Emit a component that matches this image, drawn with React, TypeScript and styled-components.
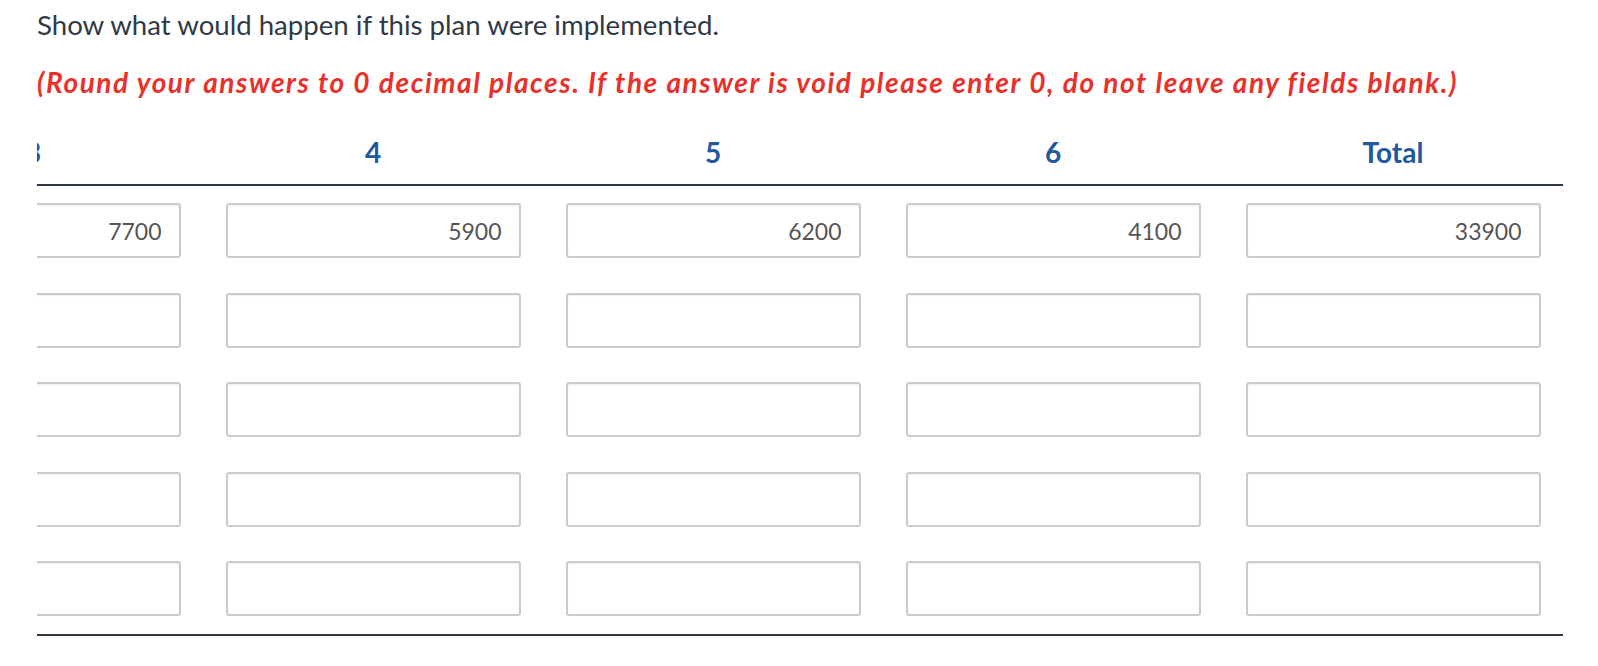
import styled, { createGlobalStyle } from "styled-components";

const GlobalStyle = createGlobalStyle`
  body {
    margin: 0;
    background: #fff;
    font-family: Lato, "Open Sans", sans-serif;
  }
`;

const Page = styled.div`
  padding: 8px 0 0 37px;
  overflow: hidden;
`;

const Prompt = styled.p`
  margin: 0;
  font-size: 27.6px;
  line-height: 34px;
  color: #2f3a45;
`;

const Note = styled.p`
  margin: 23px 0 0;
  font-size: 28px;
  line-height: normal;
  font-weight: 700;
  font-style: italic;
  letter-spacing: 1.55px;
  color: #e8312a;
`;

// the table sits in a horizontally scrolled area, columns 1-2 are off to the left
const ScrollArea = styled.div`
  margin-top: 36px;
  overflow: hidden;
`;

const Grid = styled.div`
  display: grid;
  grid-template-columns: repeat(5, 340px);
  width: 1700px;
  margin-left: -174px;
  border-bottom: 2.5px solid #2d3741;
`;

const HeadCell = styled.div`
  padding-bottom: 15px;
  border-bottom: 2px solid #2d3741;
  text-align: center;
  font-size: 28px;
  font-weight: 700;
  line-height: normal;
  color: #2158a0;
`;

const Cell = styled.div`
  display: flex;
  justify-content: center;
  padding: 17px 0 17.5px;
`;

const Field = styled.input`
  box-sizing: border-box;
  width: 295px;
  height: 55px;
  border: 2px solid #cbcbcb;
  border-radius: 3px;
  box-shadow: inset 0 1px 2px rgba(0, 0, 0, 0.07);
  padding: 0 17px;
  text-align: right;
  font-family: Lato, sans-serif;
  font-size: 23px;
  color: #555;
  background: #fff;
  outline: none;
`;

const columns = ["3", "4", "5", "6", "Total"];
const rows: string[][] = [
  ["7700", "5900", "6200", "4100", "33900"],
  ["", "", "", "", ""],
  ["", "", "", "", ""],
  ["", "", "", "", ""],
  ["", "", "", "", ""],
];

export default function App() {
  return (
    <Page>
      <GlobalStyle />
      <Prompt>Show what would happen if this plan were implemented.</Prompt>
      <Note>
        (Round your answers to 0 decimal places. If the answer is void please enter 0, do not
        leave any fields blank.)
      </Note>
      <ScrollArea>
        <Grid>
          {columns.map((c) => (
            <HeadCell key={c}>{c}</HeadCell>
          ))}
          {rows.map((row, i) =>
            row.map((v, j) => (
              <Cell key={`${i}-${j}`}>
                <Field defaultValue={v} readOnly />
              </Cell>
            ))
          )}
        </Grid>
      </ScrollArea>
    </Page>
  );
}
